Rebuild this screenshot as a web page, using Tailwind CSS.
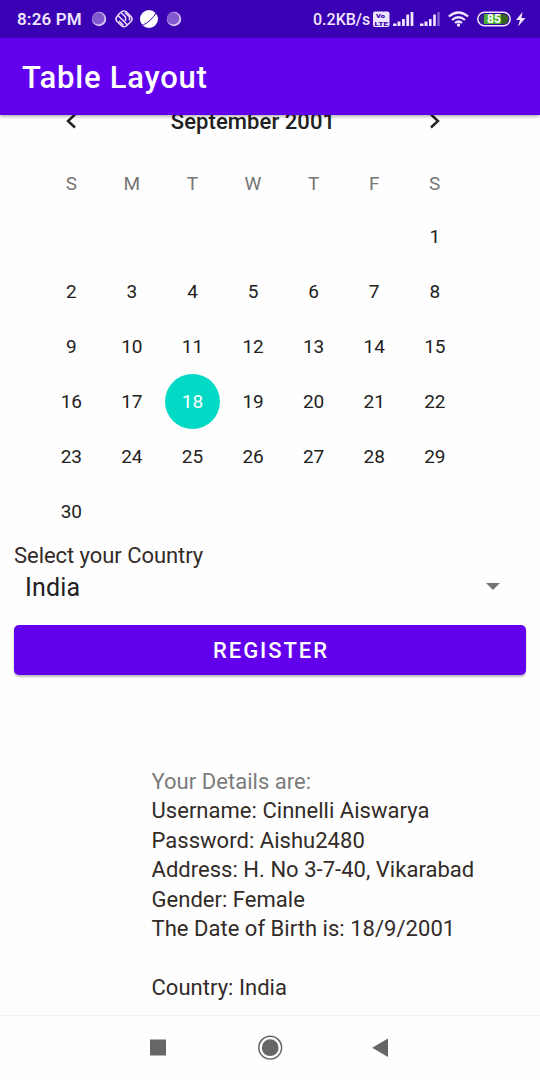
<!DOCTYPE html>
<html lang="en">
<head>
<meta charset="utf-8">
<title>Table Layout</title>
<script src="https://cdn.jsdelivr.net/npm/@tailwindcss/browser@4"></script>
</head>
<body class="bg-[#fefefe] font-['Roboto',sans-serif] text-[#212121]">
<div class="flex h-[1080px] w-[540px] flex-col overflow-hidden">
  <header class="z-10 shrink-0 shadow-[0_1px_4px_rgba(0,0,0,0.4)]">
    <div class="flex h-[38px] items-center bg-[#3a00b4] pl-[17px] text-[16px] font-medium text-[#efe5fc]">
      <span class="w-[74px] whitespace-nowrap pt-[2px] text-[17px] font-semibold tracking-[0.150px]">8:26 PM</span>
      <svg class="h-[38px] w-[92px]" viewBox="91 0 92 38">
        <circle cx="99" cy="19" r="7.2" fill="#d9c8f5"/><circle cx="98.2" cy="18.4" r="6.2" fill="#8359d0"/>
        <g fill="none" stroke="#efe5fc"><path stroke-width="1.400" d="M119.500 13.500L122 11.600Q124 10.200 126 11.600L131 16.500Q133.200 19 131 21.500L126 26.200Q124 27.500 122 26.200L117 21.500Q114.800 19 117 16.500Z"/><path stroke-width="1.500" d="M118 15.500l9.500 9.500M121.500 13l4 4v4M125 12.500l4.500 4.500v3.500M119 21l4.500 4.500"/></g>
        <circle cx="149" cy="19" r="9" fill="#fff"/><path d="M142 25.500Q151.500 21.500 156.500 12" fill="none" stroke="#3a00b4" stroke-width="1"/>
        <circle cx="174" cy="19" r="7.2" fill="#d9c8f5"/><circle cx="173.200" cy="18.400" r="6.200" fill="#8359d0"/>
      </svg>
      <span class="ml-[130px] w-[60px] whitespace-nowrap pt-[2px]">0.2KB/s</span>
      <svg class="h-[38px] w-[167px]" viewBox="373 0 167 38" fill="#efe5fc">
        <rect x="373" y="11.500" width="16.500" height="15.500" rx="2"/>
        <g fill="#3a00b4" font-size="6.200" font-weight="900" text-anchor="middle"><text x="380.500" y="18" textLength="9" lengthAdjust="spacingAndGlyphs">Vo</text><text x="381.300" y="25.600" textLength="13.500" lengthAdjust="spacingAndGlyphs">LTE</text></g>
        <path d="M393 26v-2.500h3.500V26zM397.500 26v-4.500h3V26zM402 26v-7h2.800V26zM406.300 26V14.500h2.800V26zM410.600 26V12h2.800v14z"/>
        <path d="M420 26v-2.500h3.500V26zM424.500 26v-4.500h3V26zM429 26v-7h2.600V26zM433.200 26V14.500h2.600V26z"/><path opacity=".4" d="M437.300 26V12h2.400v14z"/>
        <g fill="none" stroke="#efe5fc" stroke-width="2.200"><path d="M448.800 16.500Q458.500 8.500 468.200 16.500M452 20Q458.500 14.500 465 20M455 23Q458.500 20 462 23"/></g><circle cx="458.500" cy="25" r="1.700"/>
        <rect x="477.800" y="12.300" width="32.400" height="13.400" rx="6.700" fill="none" stroke="#efe5fc" stroke-width="1.500"/>
        <path d="M484 14h20q4.500 1 4.500 5t-4.500 5h-20z" fill="#33651f"/><path d="M484 14q-4.500 1-4.500 5t4.500 5z" fill="#3a2388"/><rect x="484" y="14" width="17" height="10" fill="#4caf32"/>
        <text x="494" y="23.200" text-anchor="middle" font-size="12" font-weight="700" fill="#fff">85</text>
        <path d="M522.500 12l-6.500 8h4l-2 6.500 7.500-8.500h-4z"/>
      </svg>
    </div>
    <div class="flex h-[77px] items-center bg-[#6200ee] pl-[22px] pt-[4px]">
      <h1 class="text-[31px] font-medium tracking-[0.750px] text-white">Table Layout</h1>
    </div>
  </header>
  <main class="flex h-[900px] shrink-0 flex-col">
    <section class="flex h-[424px] w-[424px] flex-col ml-[41px]">
      <div class="grid h-[12px] grid-cols-7 grid-rows-[12px] items-center justify-items-center">
        <svg class="h-[18px] w-4" viewBox="0 0 16 18" fill="none" stroke="#212121" stroke-width="2.400"><path d="M12 2.500L5 9l7 6.500"/></svg>
        <div class="col-span-5 whitespace-nowrap pt-px text-[22px] font-medium leading-[28px] tracking-[0.080px]">September 2001</div>
        <svg class="h-[18px] w-4" viewBox="0 0 16 18" fill="none" stroke="#212121" stroke-width="2.400"><path d="M4 2.500L11 9l-7 6.500"/></svg>
      </div>
      <div class="mt-[30px] grid h-[52px] grid-cols-7 place-items-center pt-[2px] text-[19px] text-[#757575]">
        <span>S</span><span>M</span><span>T</span><span>W</span><span>T</span><span>F</span><span>S</span>
      </div>
      <div class="grid grid-cols-7 auto-rows-[55px] place-items-center text-[19px] [&>span]:pt-[2px] [&>span]:tracking-[-0.1px]">
        <span class="col-start-7">1</span>
        <span>2</span><span>3</span><span>4</span><span>5</span><span>6</span><span>7</span><span>8</span>
        <span>9</span><span>10</span><span>11</span><span>12</span><span>13</span><span>14</span><span>15</span>
        <span>16</span><span>17</span><span class="flex size-[55px] items-center justify-center rounded-full bg-[#03dac5] text-white">18</span><span>19</span><span>20</span><span>21</span><span>22</span>
        <span>23</span><span>24</span><span>25</span><span>26</span><span>27</span><span>28</span><span>29</span>
        <span>30</span>
      </div>
    </section>
    <section class="flex flex-col px-[14px]">
      <label class="h-[30px] text-[22px] leading-[34px] tracking-[-0.050px] text-[#322b28]">Select your Country</label>
      <div class="flex h-[36px] items-center justify-between pl-[11px] pr-[26px]">
        <span class="pt-[2px] text-[25px] tracking-[0.150px]">India</span>
        <svg class="mb-[2px] h-[7px] w-[14px]" viewBox="0 0 14 7" fill="#757575"><path d="M0 0h14L7 7z"/></svg>
      </div>
      <button class="mt-[19.500px] h-[50px] rounded-[5px] bg-[#6200ee] pl-[2px] pt-[2px] text-[22px] font-medium tracking-[1.950px] text-white shadow-[0_2px_2px_rgba(0,0,0,0.25)]">REGISTER</button>
    </section>
    <section class="ml-[151.500px] mt-[92px] whitespace-nowrap text-[22px] leading-[29.500px] tracking-[0.030px] text-[#322b28]">
      <p class="text-[#7b7b7b]">Your Details are:</p>
      <p>Username: Cinnelli Aiswarya</p>
      <p>Password: Aishu2480</p>
      <p>Address: H. No 3-7-40, Vikarabad</p>
      <p>Gender: Female</p>
      <p>The Date of Birth is: 18/9/2001</p>
      <p class="mt-[29px]">Country: India</p>
    </section>
  </main>
  <nav class="flex h-[65px] shrink-0 items-center justify-center border-t border-[#f0f0f0]">
    <svg class="h-[26px] w-[240px]" viewBox="150 1035 240 26" fill="#666">
      <path d="M150 1039.500h16v16h-16z"/>
      <circle cx="270.200" cy="1047.700" r="11.400" fill="none" stroke="#666" stroke-width="1.500"/><circle cx="270.200" cy="1047.700" r="8.400"/>
      <path d="M372.200 1047.700l15.800-9.200v18.400z"/>
    </svg>
  </nav>
</div>
</body>
</html>
